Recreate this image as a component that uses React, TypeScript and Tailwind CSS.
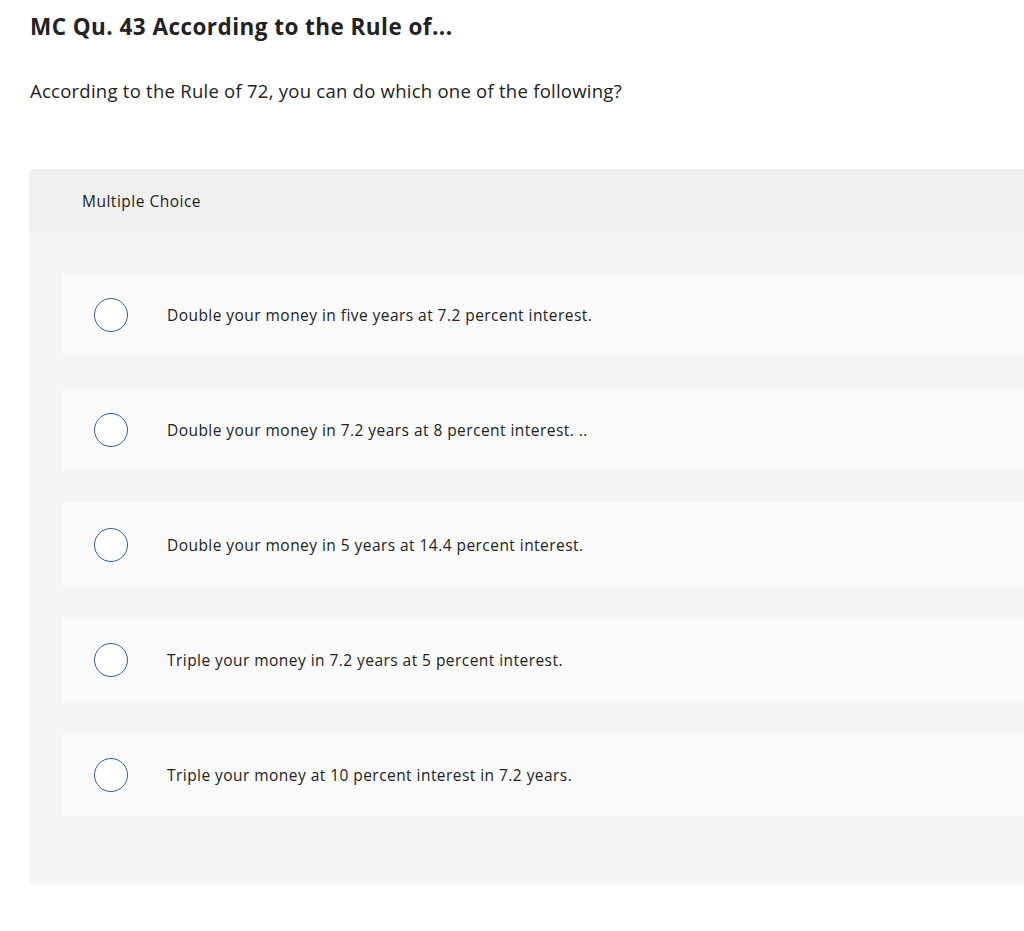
import React from "react";

const options = [
  "Double your money in five years at 7.2 percent interest.",
  "Double your money in 7.2 years at 8 percent interest. ..",
  "Double your money in 5 years at 14.4 percent interest.",
  "Triple your money in 7.2 years at 5 percent interest.",
  "Triple your money at 10 percent interest in 7.2 years.",
];

export default function App() {
  return (
    <div
      className="w-[1024px] h-[931px] overflow-hidden bg-white text-[#222222]"
      style={{ fontFamily: "'Open Sans', Lato, sans-serif" }}
    >
      <div className="pl-[30px] pt-[12px]">
        <h1 className="text-[22.5px] font-bold leading-[30px] tracking-[0.45px]">
          MC Qu. 43 According to the Rule of...
        </h1>
        <p className="mt-[37px] text-[18.5px] leading-[24px] tracking-[0.25px]">
          According to the Rule of 72, you can do which one of the following?
        </p>
      </div>
      <div className="ml-[29px] mt-[66px] w-[1010px] rounded-[4px] overflow-hidden bg-[#f5f5f5]">
        <div className="h-[63px] bg-[#f0f0f0] flex items-center pl-[53px]">
          <span className="text-[15.5px] tracking-[0.5px] pt-[3px]">Multiple Choice</span>
        </div>
        <div className="pl-[33px] pt-[41px] pb-[69px] flex flex-col gap-[32px]">
          {options.map((o) => (
            <div
              key={o}
              className="h-[83px] bg-[#fafafa] rounded-[3px] flex items-center pl-[32px]"
            >
              <span className="w-[34px] h-[34px] rounded-full border-[1.5px] border-[#2f5e99] bg-white shrink-0" />
              <span className="ml-[39px] text-[15.5px] tracking-[0.45px] pt-[3px]">{o}</span>
            </div>
          ))}
        </div>
      </div>
    </div>
  );
}
